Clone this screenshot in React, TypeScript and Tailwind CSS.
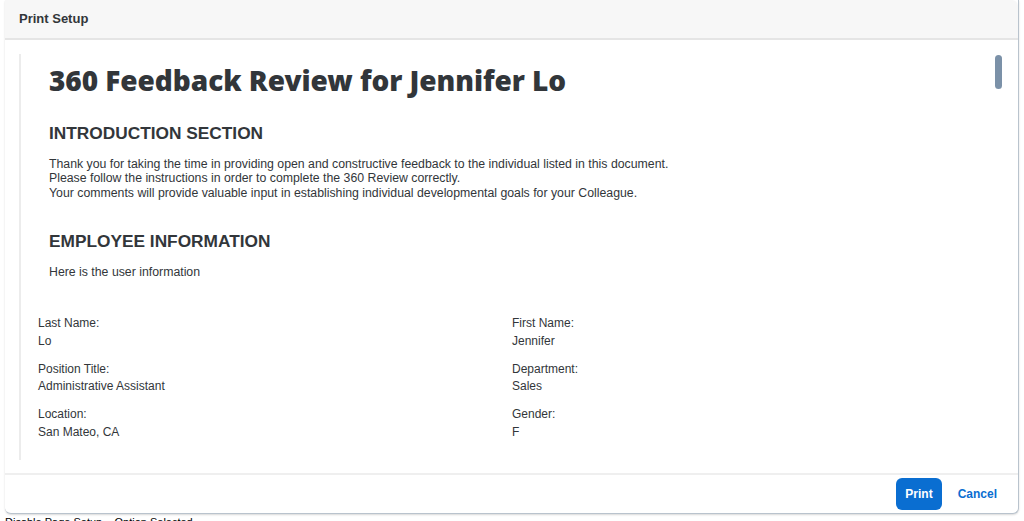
import React from 'react';

const fields = [
  { label: 'Last Name:', value: 'Lo', label2: 'First Name:', value2: 'Jennifer' },
  { label: 'Position Title:', value: 'Administrative Assistant', label2: 'Department:', value2: 'Sales' },
  { label: 'Location:', value: 'San Mateo, CA', label2: 'Gender:', value2: 'F' },
];

const App: React.FC = () => {
  return (
    <div className="w-[1024px] h-[521px] overflow-hidden bg-white font-['Liberation_Sans',Arial,sans-serif] text-[#32363a]">
      <div className="ml-[5px] w-[1014px] h-[514px] flex flex-col bg-white rounded-b-[6px] border-b border-r border-[#b9c3cd] shadow-[0_1px_2px_rgba(0,0,0,0.15)]">
        {/* Header */}
        <div className="h-[40px] shrink-0 flex items-center px-[14px] bg-[#f7f7f7] border-b-2 border-[#e5e5e5] rounded-tr-[6px]">
          <h1 className="text-[13px] font-bold text-[#32363a]">Print Setup</h1>
        </div>

        {/* Content */}
        <div className="flex-1 flex pt-[14px] pb-[13px] pl-[14px] pr-[16px] overflow-hidden">
          <div className="flex-1 border-l-2 border-[#ececec] pl-[28px]">
            <h2 className="mt-[10px] text-[28px] leading-[32px] font-black font-['Noto_Sans',sans-serif] tracking-[-0.05px] text-[#32363a]">
              360 Feedback Review for Jennifer Lo
            </h2>
            <h3 className="mt-[26px] text-[17.3px] leading-[22px] font-bold text-[#32363a]">INTRODUCTION SECTION</h3>
            <div className="mt-[13px] text-[12.3px] leading-[14.3px]">
              <p>Thank you for taking the time in providing open and constructive feedback to the individual listed in this document.</p>
              <p>Please follow the instructions in order to complete the 360 Review correctly.</p>
              <p>Your comments will provide valuable input in establishing individual developmental goals for your Colleague.</p>
            </div>
            <h3 className="mt-[30px] text-[17.3px] leading-[22px] font-bold text-[#32363a]">EMPLOYEE INFORMATION</h3>
            <p className="mt-[13px] text-[12.3px] leading-[14.3px]">Here is the user information</p>

            <div className="mt-[36px] -ml-[11px] grid grid-cols-[474px_1fr] gap-y-[10.5px] text-[12px] leading-[17.5px]">
              {fields.map((f) => (
                <React.Fragment key={f.label}>
                  <div>
                    <div>{f.label}</div>
                    <div>{f.value}</div>
                  </div>
                  <div>
                    <div>{f.label2}</div>
                    <div>{f.value2}</div>
                  </div>
                </React.Fragment>
              ))}
            </div>
          </div>
          {/* Scrollbar */}
          <div className="w-[7px] pt-[1px]">
            <div className="w-[7px] h-[34px] rounded-full bg-[#7b91a8]" />
          </div>
        </div>

        {/* Footer */}
        <div className="h-[40px] shrink-0 flex items-center justify-end gap-[16px] pr-[21px] border-t-2 border-[#efefef]">
          <button className="h-[32px] px-[9px] rounded-[6px] bg-[#0a6ed1] text-white text-[12px] font-bold">Print</button>
          <button className="text-[12px] font-bold text-[#0a6ed1]">Cancel</button>
        </div>
      </div>
      <div className="pl-[5px] mt-[2px] text-[11px] leading-[12px] text-black">Disable Page Setup – Option Selected</div>
    </div>
  );
};

export default App;
